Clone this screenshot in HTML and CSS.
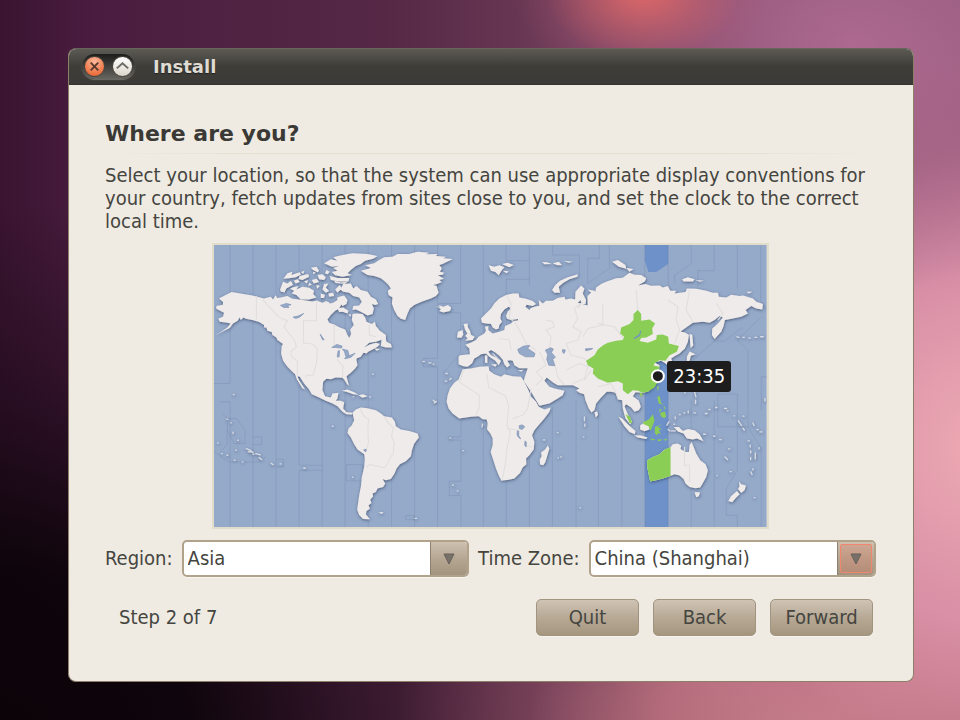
FILE: index.html
```html
<!DOCTYPE html>
<html lang="en">
<head>
<meta charset="utf-8">
<title>Install</title>
<link rel="stylesheet" href="styles.css">
</head>
<body>
<main class="window">
  <header class="titlebar">
    <div class="controls">
      <button class="control close" type="button" aria-label="Close"><svg viewBox="0 0 20 20"><path d="M6 6l8 8M14 6l-8 8"/></svg></button>
      <button class="control shade" type="button" aria-label="Roll up"><svg viewBox="0 0 20 20"><path d="M4 12L10 6.500l6 5.500"/></svg></button>
    </div>
    <span class="title">Install</span>
  </header>
  <form class="content">
    <h1>Where are you?</h1>
    <p class="intro">Select your location, so that the system can use appropriate display conventions for your country, fetch updates from sites close to you, and set the clock to the correct local time.</p>
    <div class="map">
      <svg class="world" viewBox="15 15 1656 846" role="img" aria-label="World map">
        <defs>
          <filter id="coast" x="0" y="0" width="1" height="1" filterUnits="objectBoundingBox">
            <feDropShadow dx="1" dy="3" stdDeviation="4" flood-color="#33415f" flood-opacity=".75"/>
          </filter>
        </defs>
        <rect class="sea" x="15" y="15" width="1656" height="846"/>
        <path class="zone" d="M1306 15h70v57l-36 24h-23l-11-34zM1306 350h70v511h-70z"/>
        <path class="meridians" d="M63 15V430H15M63 485V861M132 15V861M201 15V861M270 15V675H340V690H270V861M339 15V675M339 690V861M408 15V861M477 15V861M547 15V861M616 15V861M685 15V355H643V380H685V861M754 15V190H690V218H754V340L700 400M755 460V590H720V600H755V723H720V766H755V861M822 15V861M890 15V62H960M891 118H960M891 118V861M960 15V135M960 600V861M1030 15V45H1110V110M1029 500V861M1100 480V861M1135 55V130L1200 85V15M1133 55H1170V15M1167 500V861M1237 480V861M1306 15V861M1376 15V861M1445 15V72L1395 105V130M1445 480V861M1514 15V92H1465V140M1514 240V303L1440 370M1514 480V861M1583 15V145M1583 690L1550 745V825H1583V861M1583 300L1615 330V560L1655 625V861M1583 300L1655 230M1653 15V180L1671 210M1514 303H1545L1600 260M1583 462H1525V560H1620M1583 462V690M1655 510V410H1671M15 635L60 665H150L170 650M40 520L55 535V610L35 635M55 535H83L108 570V610H75L55 570M132 590H158V613H132M201 657H223V680H201M412 673H460V722H412ZM590 826H615V838H590ZM33 485H63"/>
        <g class="land" filter="url(#coast)">
          <rect class="extent" x="15" y="15" width="1656" height="846"/>
          <path d="M30 175L50 165 68 156 98 161 130 166 165 175 185 170 192 178 200 165 204 174 215 172 235 168 250 176 270 178 290 181 310 184 322 181 340 188 352 183 362 190 372 188 385 180 384 172 391 170 398 182 398 190 390 205 378 212 365 225 355 238 360 248 375 253 392 262 408 268 415 285 420 294 426 282 423 268 434 255 428 240 430 222 442 220 460 222 468 232 472 245 488 252 497 245 500 258 512 272 530 285 530 297 515 300 500 305 480 308 465 322 480 314 500 308 512 312 505 320 490 328 477 335 472 340 463 338 455 350 442 355 442 362 445 375 438 385 425 398 412 408 416 425 420 437 414 432 405 418 400 413 380 412 365 417 352 416 342 425 340 450 348 468 365 472 370 460 388 458 385 475 380 482 395 482 405 486 402 505 412 516 430 518 428 523 412 522 400 515 385 498 370 490 350 482 325 470 308 462 300 448 285 430 272 410 265 408 270 420 288 448 280 444 263 417 258 402 250 395 235 380 222 362 216 340 218 318 222 312 205 300 202 292 190 285 188 276 175 272 172 262 165 262 165 255 150 246 130 240 110 236 104 232 95 240 92 232 86 242 72 250 62 264 45 272 18 286 35 276 55 262 65 250 50 247 32 245 28 235 42 230 45 218 22 206 22 198 42 194 42 186z"/>
          <!-- Canadian Arctic -->
          <path d="M213 148L222 125 235 130 245 123 252 134 232 145 226 157 215 154zM250 142L268 138 262 148 280 140 300 143 315 152 312 162 322 172 300 178 275 178 262 165 248 160 255 152 243 146zM223 116L235 100 250 95 247 105 272 97 275 104 260 112 240 115zM272 108L297 102 300 110 280 120 268 117zM276 96L286 92 282 102zM305 83L322 80 330 92 325 97 312 90zM325 105L340 103 350 112 345 120 330 118zM308 120L322 116 330 126 314 130zM312 95L320 98 312 103zM345 132L358 130 350 142 360 153 350 158 340 148zM358 160L372 158 375 168 360 170zM362 108L385 114 420 114 418 124 390 124 365 120zM352 90L362 95 355 103 348 100zM345 70L365 58 385 62 372 52 400 45 430 40 475 42 505 48 492 56 468 62 455 72 440 78 425 90 415 100 428 105 400 110 378 106 368 96 385 92 372 84 390 78 368 80zM378 148L392 135 398 145 385 158zM402 132L425 130 432 145 442 138 455 150 475 155 485 170 500 178 507 192 498 195 488 192 494 205 490 222 475 226 455 215 440 208 430 210 432 198 450 196 458 185 450 172 432 168 420 158 402 155 394 148zM390 170L405 166 415 180 412 192 400 198 392 188zM385 205L402 202 418 212 415 220 400 215 390 216zM418 222l8 2-3 6zM352 185l10 3-6 5zM300 128l8 6-10 3zM322 134l10 4-8 8zM335 160l12 4-2 10-10 0zM375 122l20 5 20-2-8 6-28-2zM254 122l12-4 6 8-12 4zM285 124l12-4-4 10z"/>
          <path d="M517 300L528 290 532 305 545 312 548 322 530 322 515 318zM495 325l18 2-10 5zM487 300l12 2-8 3z"/>
          <!-- Greenland and Iceland -->
          <path d="M455 92L485 84 468 76 495 70 510 60 525 52 550 50 565 42 600 42 625 35 660 38 650 43 685 42 680 48 710 50 702 55 730 57 712 66 700 72 690 75 698 85 692 95 705 98 700 104 686 106 704 116 690 120 698 126 684 132 672 135 682 138 688 158 680 168 665 175 645 182 630 188 615 195 602 205 595 220 588 240 575 236 565 228 555 210 548 190 550 172 538 165 536 152 545 145 538 135 528 125 515 115 495 108 475 105zM680 198L692 202 688 195 702 200 716 195 726 203 722 213 702 217 690 213 695 207z"/>
          <!-- South America and Caribbean -->
          <path d="M430 518L440 508 455 502 475 504 500 510 515 520 525 528 548 532 557 545 560 558 575 568 600 572 625 580 629 592 615 610 608 630 605 648 590 663 572 672 562 685 556 700 545 716 530 720 520 716 528 730 522 740 505 745 500 755 490 760 492 768 483 778 487 788 478 795 482 805 472 812 470 822 482 837 462 836 450 824 444 808 450 765 455 740 458 710 465 680 467 655 465 642 445 628 435 612 425 592 415 578 418 565 428 555 435 540zM398 452L415 448 435 456 448 464 432 462 412 455zM448 465L462 462 475 468 460 473zM478 469l9 1-4 3zM508 816l15 0-5 5zM430 468l7 2-5 2zM415 802l7 0z"/>
          <!-- Africa and Madagascar -->
          <path d="M760 387L785 385 810 380 838 378 840 392 855 402 875 410 885 402 910 408 935 410 943 422 950 435 958 452 965 470 980 485 988 500 1005 508 1024 502 1020 515 1005 535 990 552 975 570 968 585 975 605 973 628 960 645 950 655 951 672 940 682 932 698 915 715 895 719 876 721 868 705 860 685 852 660 844 635 850 615 850 595 843 580 833 567 835 550 832 538 820 537 808 528 785 530 765 533 750 535 730 520 718 505 712 485 715 465 722 445 735 428 748 418zM1015 616L1020 625 1015 642 1008 665 1002 675 992 673 991 658 997 648 995 637 1007 628z"/>
          <!-- Europe and the Middle East -->
          <path transform="translate(690)" d="M62 345L92 342 90 325 78 314 94 308 110 300 118 290 135 280 140 272 137 260 147 258 147 270 160 280 180 275 195 270 197 258 215 250 222 243 236 241 236 237 215 240 203 236 200 228 205 215 215 205 208 200 195 208 185 222 183 235 188 245 180 255 178 265 170 268 160 262 155 252 140 250 128 248 125 235 140 220 155 205 165 190 180 175 200 165 220 160 238 160 240 172 260 176 280 183 290 192 280 198 262 194 258 200 270 210 275 204 285 200 300 197 298 180 310 190 320 182 340 182 355 174 375 170 378 178 395 175 407 178 408 155 425 136 435 145 430 160 440 180 438 192 425 192 424 180 415 188 445 196 444 168 455 158 445 148 465 152 475 160 468 148 485 152 500 130 530 118 560 120 560 430 390 435 355 435 342 428 322 412 315 422 330 440 345 445 375 452 370 465 355 475 330 490 300 497 290 480 275 455 260 432 253 422 258 405 265 384 240 384 225 375 220 362 212 360 204 362 212 375 203 382 195 372 190 358 180 347 168 337 155 330 147 335 155 345 170 352 185 362 178 375 168 362 150 350 140 340 125 342 115 350 105 355 98 370 85 380 72 378 58 372 58 350zM73 252L85 250 86 262 92 272 95 284 106 290 100 300 78 302 85 294 78 288 84 280 77 268zM56 275L70 270 72 284 66 293 53 292zM148 76L165 80 180 76 195 82 188 90 178 106 168 96 155 92zM188 72L205 68 223 75 210 82zM190 92l18 2-6 6zM338 150L348 135 362 122 385 112 415 103 414 110 390 118 372 128 358 140 362 158 345 158zM137 345l7 2 0 22-7-2zM155 372l18 0-5 8zM236 391l16-2-6 6zM308 66l15 1 14 5-22 1zM340 70l18-5 10 10-14 1zM372 62l28 3-12 3zM367 70l15 2z"/>
          <!-- Asia -->
          <path transform="translate(1110)" d="M50 142L65 132 80 125 110 115 130 113 150 98 165 104 185 105 200 115 196 124 175 136 198 132 215 137 240 136 250 142 265 138 272 152 290 152 285 160 318 156 322 145 350 146 380 152 400 158 415 158 418 170 440 172 455 164 480 168 490 166 520 175 530 185 550 192 548 208 530 205 515 198 498 210 505 220 485 230 460 235 436 240 432 258 425 275 405 297 397 285 398 265 415 250 430 232 420 228 405 240 390 248 370 245 340 248 320 262 303 274 318 278 328 285 325 305 316 325 300 340 285 348 275 355 280 370 268 380 258 370 245 362 225 367 240 375 238 395 235 425 220 442 205 455 190 458 168 456 160 468 178 482 184 500 178 510 165 515 155 502 140 492 135 498 145 522 158 545 152 552 138 535 130 505 128 480 115 478 108 458 95 455 82 455 65 472 50 490 45 510 36 517 28 505 18 480 14 462 0 458 -10 450 0 445 -25 432 -60 435 -60 250 40 200zM98 65L115 60 138 75 140 86 118 80zM140 84l22 3-12 8zM308 118L325 112 345 118 340 124 312 124zM348 120l25 2-12 3zM500 155l18 0-10 5zM325 130l14 3zM330 282l8 2 3 32-8 8zM322 350l8-16 18 8-14 5-4 15-8 2zM45 516l8-2 3 10-7 8z"/>
          <!-- Indonesia and Oceania -->
          <path transform="translate(1110 360)" d="M117 170L128 175 148 195 168 212 166 222 150 215 135 198zM165 225L185 226 204 232 200 236 175 232zM182 195L195 188 208 195 210 208 195 213 182 208zM283 200L298 200 310 212 325 206 345 210 360 222 372 243 352 235 340 238 322 235 312 220 295 214zM203 300L220 290 240 282 255 268 272 262 280 252 294 250 305 256 303 266 318 275 328 275 330 255 336 245 343 262 350 280 362 300 378 312 385 330 380 350 370 368 362 382 348 384 330 380 318 370 312 356 300 346 285 342 270 348 250 355 230 360 212 364 208 345 203 320zM345 396l16 0-3 12-8 3zM478 364l7 8 14 4-4 14-10 8-10-12 5-8zM472 392l8 10-12 12-10 12-12-4 8-14z"/>
          <path class="isles" transform="translate(1110 360)" d="M315 98h2M345 95l4 15M348 120v10M287 170v6M283 192h2M300 163h2M313 158h3M326 152v6M343 158h5M377 160h6M388 148h3M408 142h4M435 145h6M443 152h2M463 167h2M490 168h3M476 182l10 14M490 204l4 6M520 188l3 8M532 208h4M541 215h6M505 242h4M512 255v5M513 272v6M513 292v6M527 278v18M538 262v4M514 335l3 8M520 325v4M262 195l6-10M266 208l4 4M275 212h12M372 222h6M402 228h4M420 238h5M447 266h3M436 290l8 8M412 346h1M452 334h3M524 412h2M556 115v8M15 170v12M16 192v6M12 230h1M2 442h1"/>
          <path class="isles" d="M112 625l14 6M118 634l14 2M140 640l14 4M150 652l8 6M132 642h2M54 537h2M65 548h2M72 576v4M86 600h2M26 608h2M38 640h2M54 645h2M80 630h2M76 660h2M100 665h2M186 669l6 4M213 671h3M284 684h4M370 558h2M73 463h2M430 711h1M618 834h4M490 402h2M642 364h3M659 368h6M672 372h2M710 400h4M708 423h4M722 418l3-3M672 480l8 6M675 488l6-4M818 560l2-8M722 593h2M761 631h2M730 735h2M744 752h2M1044 577h2M1002 599h4M1046 653h1M1054 650h2M1582 290l6 2M1600 292h4M1618 294h4M1636 292h5M1653 290h8"/>
        </g>
        <path class="borders" d="M142 168V238M160 178L185 205 210 232 235 242 225 260 235 275 255 298 262 320 245 335 248 350 265 362V405M322 185V242H283V308L310 312 325 325 322 370 312 405H292L290 415M375 253V315M388 345L385 360 402 378 400 412M480 255v30l20 5M453 505l10 22 15 10-2 30 2 40-8 25M525 528l12 20 15 15-5 25 8 20-3 30-25 45-20-5-25-5-10 8M833 402l5 40 50 25 10 30-5 60 10 20-10 45-5 50-10 50M765 387l-15 38 60 40v35l-10 25M965 445l-10 60-15 20-30 10M943 615l25 5M893 565l35 5M890 165l15 25-5 45 15 10 15 25 20 40 30 20M1010 240l20 5 5 15-25 10 15 20-5 35M1070 310l35-10 10-25-25-15 15-25-10-30 20-15M1070 310l15 35 40 10 20 20 30-10M1120 185l-15 20M1180 190v65l-45 10-15 25M1165 250l50 10 30 40M1280 150l5 60-10 20M1375 180l30 20-5 40 10 30-15 40M1440 150l-10 60 20 35M1520 190l20 30-15 20M990 335l20 40-30 20 20 20-20 20M1035 365l10 45 20 25M1070 390l40-20 25 10-10 35-35 15M1125 420l20-30M1165 440l40-10 20 40M850 340l20 20M905 330l-5-30-30-5M1425 620v55h15v50"/>
        <path class="water" d="M214 196l18-6 14 4-12 3 6 5-16 0zM252 231l15-3 17-8-12 11-12 4zM333 282l12 17-5 0zM368 322l15-9 16 5-2 6-18-2zM387 332l4 0-1 18-6 0zM400 327l16 4 4 16-10 2-4-14zM406 354l16-8 16-7-12 12-18 5zM930 340l-5-12 18-10 18-2-6 9 22 15-3 10-26 0zM1008 330l16-7 8 4-6 10 12 14-8 6 6 20-18-2-6-18 3-14zM1060 328l8 2-4 10-5-4zM1128 326l22-1-5 3-16 4zM930 556l10-2 6 6-8 8-8-3zM924 572l4 0 0 14 6 10-6-4-5-8zM947 602l4 4-1 14-4-6zM463 629l8-2-1 8z"/>
        <g class="selected" transform="translate(1110)">
          <path d="M20 362L45 345 55 328 72 315 85 308 110 302 130 300 134 290 122 280 125 262 150 252 162 240 162 222 175 210 185 222 185 242 210 238 227 250 218 265 220 282 200 292 185 294 180 303 205 308 230 298 232 285 250 283 266 290 268 310 298 318 292 335 270 345 258 362 240 360 225 370 222 376 240 380 235 400 240 415 232 430 225 442 205 455 190 458 175 452 160 450 145 462 130 450 130 430 115 423 85 428 55 415 40 400 42 385 25 375z"/>
          <path d="M203 660L220 650 240 642 255 628 273 621V707L250 715 230 720 212 724 208 705 203 680zM138 522l14 8 6 20-8-2zM190 546l18-8 12-16 5 20-12 30-6-14-14-6zM226 560l22-8-14 8 12 6-8 4 6 12-8-4-4 8-6-8zM233 470l8-2 3 20 8 6-14-4zM240 505l6 4-6 8zM252 496l6 8-4 4zM242 518l14-4 4 14-6 6-10-6zM232 440l6-2-3 16zM180 458l10 2-6 12zM210 595l18 2-8 4zM232 598l18 0-12 6zM253 598l12-4-8 8z"/>
          <path class="lake" d="M163 296L180 284 184 272 180 287z"/>
        </g>
        <circle class="pin" cx="1345" cy="408" r="18"/>
      </svg>
      <output class="clock">23:35</output>
    </div>
    <div class="fields">
      <label for="region">Region:</label>
      <span class="combo">
        <select id="region"><option>Asia</option></select>
        <span class="arrow"><svg viewBox="0 0 12 12"><path d="M1 1H11L6 11Z"/></svg></span>
      </span>
      <label for="zone">Time Zone:</label>
      <span class="combo">
        <select id="zone"><option>China (Shanghai)</option></select>
        <span class="arrow focused"><svg viewBox="0 0 12 12"><path d="M1 1H11L6 11Z"/></svg></span>
      </span>
    </div>
    <footer class="actions">
      <span class="step">Step 2 of 7</span>
      <button type="button">Quit</button>
      <button type="button">Back</button>
      <button type="button">Forward</button>
    </footer>
  </form>
</main>
</body>
</html>
```
FILE: styles.css
```css
* {
  box-sizing: border-box;
}

body {
  margin: 0;
  min-height: 100vh;
  padding: 48px 46px 38px 68px;
  color: #454540;
  font-family: "DejaVu Sans Condensed", "DejaVu Sans", sans-serif;
  font-size: 20px;
  font-stretch: condensed;
  line-height: 23px;
  background:
    radial-gradient(ellipse 130px 90px at 67% -1%, rgba(225, 105, 104, .95) 0%, rgba(210, 100, 106, .5) 45%, rgba(190, 90, 110, .15) 75%, rgba(190, 90, 110, 0) 100%),
    radial-gradient(ellipse 340px 260px at 89% 6%, rgba(178, 108, 148, .85), rgba(160, 95, 135, .4) 50%, rgba(160, 95, 135, 0) 100%),
    radial-gradient(ellipse 460px 440px at 104% 62%, #efacb4 0%, rgba(228, 152, 174, .85) 40%, rgba(200, 120, 145, .4) 70%, rgba(190, 110, 130, 0) 100%),
    radial-gradient(ellipse 440px 200px at 87% 100%, #c57f85 0%, rgba(190, 115, 125, .8) 40%, rgba(150, 85, 100, .35) 70%, rgba(120, 60, 80, 0) 100%),
    radial-gradient(ellipse 560px 560px at 0% 106%, #0a0307 0%, rgba(10, 3, 8, .92) 35%, rgba(20, 7, 17, .5) 65%, rgba(40, 15, 35, 0) 100%),
    linear-gradient(90deg, #3a1431 0%, #4a1d40 10%, #562846 40%, #6b3a56 58%, #8d5474 80%, #935b7b 100%);
}

.window {
  display: flex;
  flex-direction: column;
  min-height: calc(100vh - 86px);
  overflow: hidden;
  border: 1px solid #8d806b;
  border-top-color: #68655b;
  border-radius: 8px;
  background: #efebe3;
}

.titlebar {
  display: flex;
  align-items: center;
  gap: 18px;
  height: 36px;
  padding: 0 13px;
  border-bottom: 1px solid #343330;
  background: linear-gradient(#5b5a54, #3e3d38 50%, #3b3a36);
}

.controls {
  display: flex;
  align-items: center;
  justify-content: space-between;
  width: 53px;
  height: 25px;
  padding: 0 2px;
  border-radius: 13px;
  background: linear-gradient(#1d1d1b, #66655f);
  box-shadow: 0 1px 1px #6f6e67;
}

.control {
  width: 21px;
  height: 21px;
  padding: 0;
  border: 1px solid #4a453e;
  border-radius: 50%;
}

.close {
  background: radial-gradient(circle at 50% 25%, #fbb99d, #f07d4e 60%, #e05a28);
}

.shade {
  background: linear-gradient(#ffffff, #dcd6cb);
}

.control svg {
  display: block;
  fill: none;
  stroke: #5a3a2c;
  stroke-width: 2;
}

.shade svg {
  stroke: #6b6a64;
}

.title,
h1 {
  font-family: "DejaVu Sans", sans-serif;
  font-stretch: normal;
  font-weight: bold;
}

.title {
  color: #dfdbd2;
  font-size: 18px;
  text-shadow: 0 1px 1px #222;
}

.content {
  display: flex;
  flex: 1;
  flex-direction: column;
  padding: 37px 37px 45px 36px;
}

h1 {
  margin: 0;
  padding-bottom: 7px;
  border-bottom: 1px solid;
  border-image: linear-gradient(90deg, transparent, #e4dfd0 20%, #e4dfd0 80%, transparent) 1;
  color: #3a3935;
  font-size: 22px;
  line-height: 24px;
}

.intro {
  margin: 10px 0;
}

.map {
  position: relative;
  align-self: center;
  width: 72.2%;
  border: 2px solid #e2dccb;
}

.world {
  display: block;
  width: 100%;
}

.sea, .water {
  fill: #95a9c9;
}

.water {
  stroke: #7d90b0;
  stroke-width: 2;
}

.zone {
  fill: #6d91c8;
}

.meridians {
  fill: none;
  stroke: #5d7398;
  stroke-opacity: .3;
  stroke-width: 2;
}

.land {
  fill: #efebeb;
}

.extent {
  fill: none;
}

.isles {
  fill: none;
  stroke: #d5dae3;
  stroke-linecap: round;
  stroke-width: 4;
}

.borders {
  fill: none;
  stroke: #e0dddd;
  stroke-width: 3;
}

.selected {
  fill: #8bce55;
}

.lake {
  fill: #7395bd;
  stroke: #7395bd;
  stroke-width: 3;
}

.pin {
  fill: #1d1d1d;
  stroke: #ffffff;
  stroke-width: 6;
}

.clock {
  position: absolute;
  top: 41%;
  left: 82%;
  padding: 4px 6px;
  border-radius: 3px;
  background: #1d1d1d;
  color: #ffffff;
}

.fields {
  display: flex;
  align-items: center;
  gap: 9px;
  margin-top: 11px;
}

.combo {
  display: flex;
  flex: 1;
  height: 37px;
  overflow: hidden;
  border: 2px solid #b0a28b;
  border-radius: 5px;
  background: #ffffff;
  box-shadow: 0 1px 0 #f8f5ef;
}

select {
  flex: 1;
  min-width: 0;
  padding: 0 4px;
  border: 0;
  appearance: none;
  background: none;
  color: inherit;
  font: inherit;
}

.arrow {
  position: relative;
  display: flex;
  align-items: center;
  justify-content: center;
  width: 37px;
  border-left: 1px solid #8e806c;
  background: linear-gradient(#cdc0b0, #b6a793 50%, #a39480);
}

.arrow svg {
  position: relative;
  width: 12px;
  fill: #77716a;
  stroke: #66615a;
}

.focused::before {
  position: absolute;
  inset: 2px;
  border: 1px solid #f0866d;
  border-radius: 2px;
  background: rgba(216, 120, 96, .3);
  content: "";
}

.actions {
  display: flex;
  align-items: center;
  gap: 14px;
  margin-top: 22px;
  padding: 0 3px 0 14px;
}

.step {
  flex: 1;
}

.actions button {
  width: 103px;
  height: 37px;
  padding: 0;
  border: 1px solid #a29480;
  border-radius: 5px;
  background: linear-gradient(#cfc3b5, #b7a995 50%, #a5967e);
  box-shadow: 0 1px 0 #f8f5ef;
  color: inherit;
  font: inherit;
}
```
